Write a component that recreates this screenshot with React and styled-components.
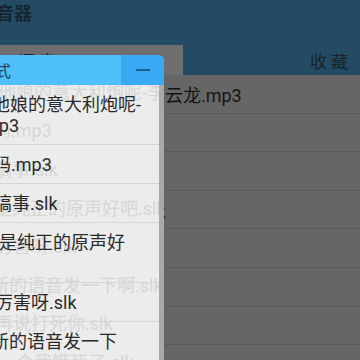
import React from 'react';
import styled, { createGlobalStyle } from 'styled-components';

const Global = createGlobalStyle`
  html, body { margin: 0; padding: 0; background: #666; }
  body { font-family: Roboto, "Noto Sans CJK SC", sans-serif; }
`;

const Screen = styled.div`
  position: relative;
  width: 360px;
  height: 360px;
  overflow: hidden;
  background: #666666;
`;

const TitleBar = styled.div`
  height: 45px;
  background: #234b64;
  overflow: hidden;
`;

const Title = styled.div`
  margin: 3px 0 0 -22px;
  font-size: 18px;
  line-height: 22px;
  font-weight: 700;
  color: #16252f;
  white-space: nowrap;
`;

const Tabs = styled.div`
  display: flex;
  height: 30px;
`;

const Tab = styled.div`
  display: flex;
  align-items: center;
  justify-content: ${p => (p.$right ? 'flex-end' : 'flex-start')};
  width: ${p => (p.$right ? 'auto' : '183px')};
  flex: ${p => (p.$right ? 1 : 'none')};
  padding: ${p => (p.$right ? '0 8px 0 0' : '0 0 0 18px')};
  background: ${p => (p.$right ? '#234b64' : '#6e6e6e')};
  font-size: 17px;
  color: #18232b;
  letter-spacing: 4px;
  box-sizing: border-box;
`;

const List = styled.div`
  display: flex;
  flex-direction: column;
`;

const Row = styled.div`
  height: 38.6px;
  box-sizing: border-box;
  border-bottom: 1px solid;
  display: flex;
  align-items: center;
  overflow: hidden;
  white-space: nowrap;
  font-size: 18px;
  color: ${p => (p.$ghost ? '#d6d6d6' : '#151515')};
  border-color: ${p => (p.$ghost ? 'transparent' : '#5a5a5a')};
`;

const Shifted = styled.span`
  display: block;
  flex: none;
`;

const Panel = styled.div`
  position: absolute;
  left: 0;
  top: 55px;
  width: 164px;
  bottom: 0;
  display: flex;
  flex-direction: column;
`;

const PanelHead = styled.div`
  display: flex;
  height: 30px;
  background: #4fc0f9;
  border-top-right-radius: 6px;
  overflow: hidden;
`;

const PanelTitle = styled.div`
  flex: 1;
  display: flex;
  align-items: center;
  overflow: hidden;
  white-space: nowrap;
  font-size: 16px;
  color: #23475f;
`;

const MinButton = styled.div`
  width: 43px;
  display: flex;
  align-items: center;
  justify-content: center;
  background: #39a9f4;
  &::after {
    content: '';
    width: 14px;
    height: 2px;
    background: #1f5f8e;
  }
`;

const PanelBody = styled.div`
  position: relative;
  flex: 1;
  background: #ececec;
  border-right: 5px solid #a9a9a9;
  overflow: hidden;
`;

const Ghost = styled.div`
  position: absolute;
  left: 0;
  right: 0;
  top: -13px;
  display: flex;
  flex-direction: column;
`;

const Items = styled.div`
  position: relative;
  display: flex;
  flex-direction: column;
`;

const Item = styled.div`
  height: ${p => (p.$tall ? 60 : 39)}px;
  box-sizing: border-box;
  padding: 9px 0;
  border-bottom: 1px solid #d6d6d6;
  display: flex;
  flex-direction: column;
  justify-content: ${p => (p.$tall ? 'flex-start' : 'center')};
  font-size: 18px;
  line-height: 21px;
  color: #2a2a2a;
  white-space: nowrap;
`;

const back = [
  { text: '他娘的意大利炮呢-李云龙.mp3', x: -2 },
  { text: '密码.mp3', x: -25 },
  { text: '别搞事.slk', x: -24 },
  { text: '这才是纯正的原声好吧.slk', x: -42 },
  { text: '你好厉害呀.slk', x: -41 },
  { text: '发个新的语音发一下啊.slk', x: -45 },
  { text: '你再说打死你.slk', x: -23 },
  { text: '来一个我饿死了.slk', x: -20 },
];

const items = [
  { lines: [['他娘的意大利炮呢-', -8], ['mp3', -17]], tall: true },
  { lines: [['密码.mp3', -25]] },
  { lines: [['别搞事.slk', -24]] },
  { lines: [['这才是纯正的原声好', -37]], tall: true },
  { lines: [['你好厉害呀.slk', -41]] },
  { lines: [['发个新的语音发一下', -45], ['啊.slk', -45]], tall: true },
];

export default function App() {
  return (
    <Screen>
      <Global />
      <TitleBar>
        <Title>录音器</Title>
      </TitleBar>
      <Tabs>
        <Tab>语音</Tab>
        <Tab $right>收藏</Tab>
      </Tabs>
      <List>
        {back.map((b, i) => (
          <Row key={i}>
            <Shifted style={{ marginLeft: b.x }}>{b.text}</Shifted>
          </Row>
        ))}
      </List>

      <Panel>
        <PanelHead>
          <PanelTitle>
            <Shifted style={{ marginLeft: -53 }}>播放模式</Shifted>
          </PanelTitle>
          <MinButton />
        </PanelHead>
        <PanelBody>
          <Ghost>
            {back.map((b, i) => (
              <Row key={i} $ghost>
                <Shifted style={{ marginLeft: b.x }}>{b.text}</Shifted>
              </Row>
            ))}
          </Ghost>
          <Items>
            {items.map((it, i) => (
              <Item key={i} $tall={it.tall}>
                {it.lines.map(([t, x], j) => (
                  <Shifted key={j} style={{ marginLeft: x }}>{t}</Shifted>
                ))}
              </Item>
            ))}
          </Items>
        </PanelBody>
      </Panel>
    </Screen>
  );
}
